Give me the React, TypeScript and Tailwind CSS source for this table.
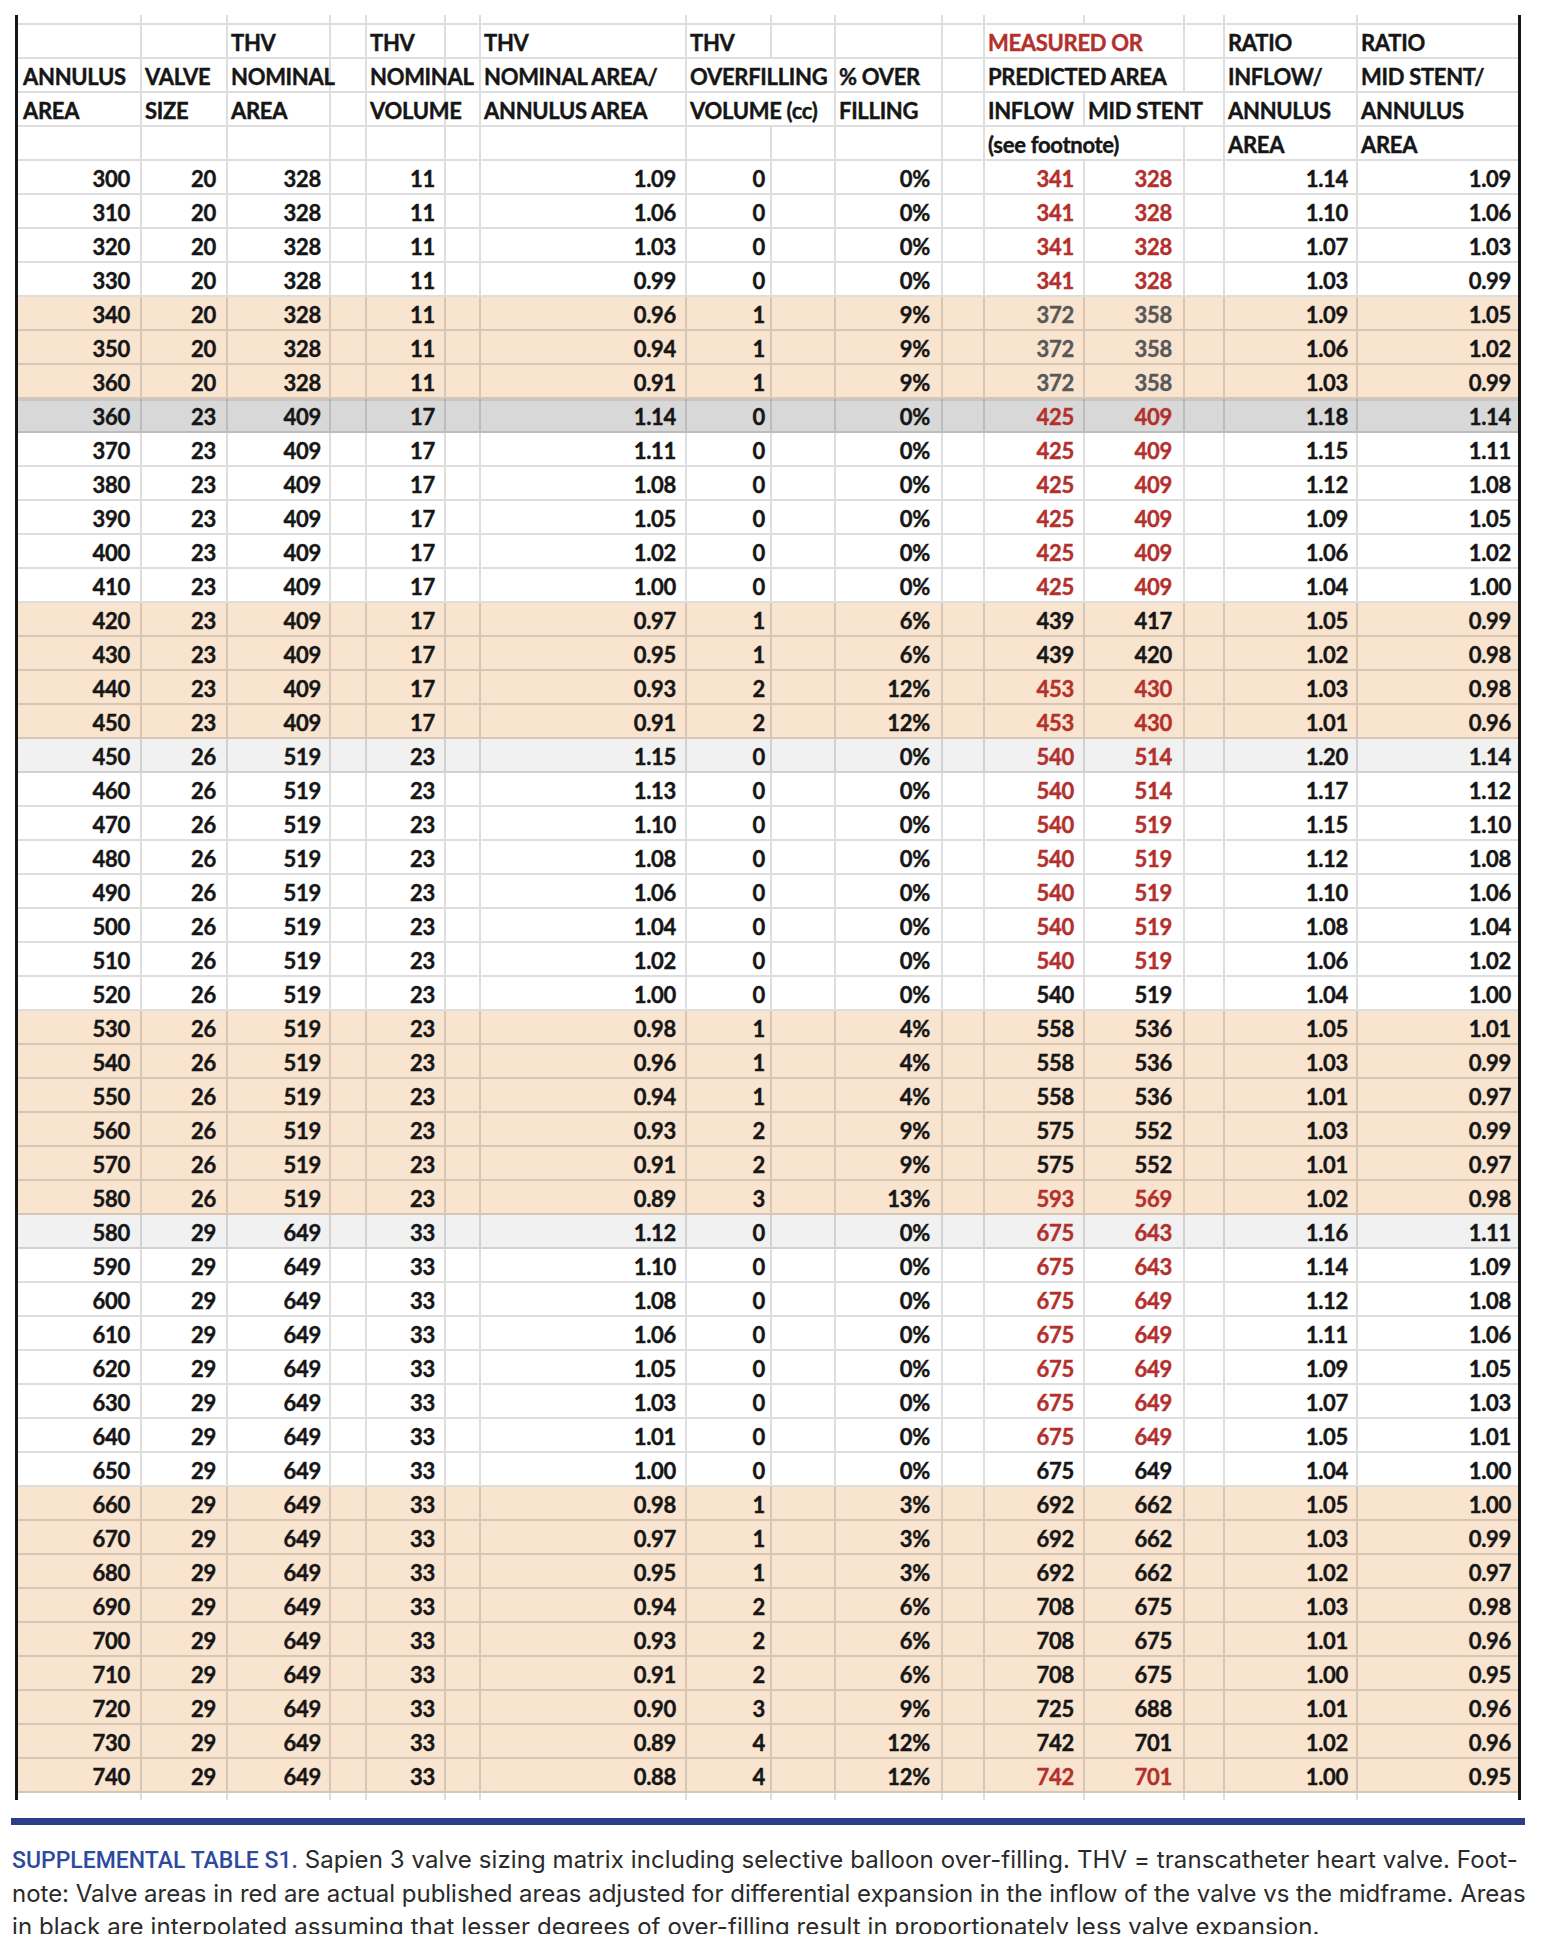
import React from "react";

const GRID =
  "grid grid-cols-[124px_86px_103px_36px_79px_35px_206px_85px_64px_107px_42px_100px_100px_40px_133px_160px]";

type HCell = { t?: string; s?: number; red?: boolean };

const RAW = `300,20,328,11,1.09,0,0%,341,328,1.14,1.09,w,r
310,20,328,11,1.06,0,0%,341,328,1.10,1.06,w,r
320,20,328,11,1.03,0,0%,341,328,1.07,1.03,w,r
330,20,328,11,0.99,0,0%,341,328,1.03,0.99,w,r
340,20,328,11,0.96,1,9%,372,358,1.09,1.05,p,s
350,20,328,11,0.94,1,9%,372,358,1.06,1.02,p,s
360,20,328,11,0.91,1,9%,372,358,1.03,0.99,p,s
360,23,409,17,1.14,0,0%,425,409,1.18,1.14,g,r
370,23,409,17,1.11,0,0%,425,409,1.15,1.11,w,r
380,23,409,17,1.08,0,0%,425,409,1.12,1.08,w,r
390,23,409,17,1.05,0,0%,425,409,1.09,1.05,w,r
400,23,409,17,1.02,0,0%,425,409,1.06,1.02,w,r
410,23,409,17,1.00,0,0%,425,409,1.04,1.00,w,r
420,23,409,17,0.97,1,6%,439,417,1.05,0.99,p,k
430,23,409,17,0.95,1,6%,439,420,1.02,0.98,p,k
440,23,409,17,0.93,2,12%,453,430,1.03,0.98,p,r
450,23,409,17,0.91,2,12%,453,430,1.01,0.96,p,r
450,26,519,23,1.15,0,0%,540,514,1.20,1.14,l,r
460,26,519,23,1.13,0,0%,540,514,1.17,1.12,w,r
470,26,519,23,1.10,0,0%,540,519,1.15,1.10,w,r
480,26,519,23,1.08,0,0%,540,519,1.12,1.08,w,r
490,26,519,23,1.06,0,0%,540,519,1.10,1.06,w,r
500,26,519,23,1.04,0,0%,540,519,1.08,1.04,w,r
510,26,519,23,1.02,0,0%,540,519,1.06,1.02,w,r
520,26,519,23,1.00,0,0%,540,519,1.04,1.00,w,k
530,26,519,23,0.98,1,4%,558,536,1.05,1.01,p,k
540,26,519,23,0.96,1,4%,558,536,1.03,0.99,p,k
550,26,519,23,0.94,1,4%,558,536,1.01,0.97,p,k
560,26,519,23,0.93,2,9%,575,552,1.03,0.99,p,k
570,26,519,23,0.91,2,9%,575,552,1.01,0.97,p,k
580,26,519,23,0.89,3,13%,593,569,1.02,0.98,p,r
580,29,649,33,1.12,0,0%,675,643,1.16,1.11,l,r
590,29,649,33,1.10,0,0%,675,643,1.14,1.09,w,r
600,29,649,33,1.08,0,0%,675,649,1.12,1.08,w,r
610,29,649,33,1.06,0,0%,675,649,1.11,1.06,w,r
620,29,649,33,1.05,0,0%,675,649,1.09,1.05,w,r
630,29,649,33,1.03,0,0%,675,649,1.07,1.03,w,r
640,29,649,33,1.01,0,0%,675,649,1.05,1.01,w,r
650,29,649,33,1.00,0,0%,675,649,1.04,1.00,w,k
660,29,649,33,0.98,1,3%,692,662,1.05,1.00,p,k
670,29,649,33,0.97,1,3%,692,662,1.03,0.99,p,k
680,29,649,33,0.95,1,3%,692,662,1.02,0.97,p,k
690,29,649,33,0.94,2,6%,708,675,1.03,0.98,p,k
700,29,649,33,0.93,2,6%,708,675,1.01,0.96,p,k
710,29,649,33,0.91,2,6%,708,675,1.00,0.95,p,k
720,29,649,33,0.90,3,9%,725,688,1.01,0.96,p,k
730,29,649,33,0.89,4,12%,742,701,1.02,0.96,p,k
740,29,649,33,0.88,4,12%,742,701,1.00,0.95,p,r`;

const ROWS = RAW.split("\n").map((l) => l.trim().split(","));

const HEADER: HCell[][] = [
  [
    {}, {}, { t: "THV" }, {}, { t: "THV" }, {}, { t: "THV" }, { t: "THV" }, {}, {}, {},
    { t: "MEASURED OR", s: 2, red: true }, {}, { t: "RATIO" }, { t: "RATIO" },
  ],
  [
    { t: "ANNULUS" }, { t: "VALVE" }, { t: "NOMINAL" }, {}, { t: "NOMINAL" }, {},
    { t: "NOMINAL AREA/" }, { t: "OVERFILLING", s: 2 }, { t: "% OVER" }, {},
    { t: "PREDICTED AREA", s: 2 }, {}, { t: "INFLOW/" }, { t: "MID STENT/" },
  ],
  [
    { t: "AREA" }, { t: "SIZE" }, { t: "AREA" }, {}, { t: "VOLUME" }, {},
    { t: "ANNULUS AREA" }, { t: "VOLUME (cc)", s: 2 }, { t: "FILLING" }, {},
    { t: "INFLOW" }, { t: "MID STENT", s: 2 }, { t: "ANNULUS" }, { t: "ANNULUS" },
  ],
  [
    {}, {}, {}, {}, {}, {}, {}, {}, {}, {}, {},
    { t: "(see footnote)", s: 2 }, {}, { t: "AREA" }, { t: "AREA" },
  ],
];

const LINE = "border-black/[0.13]";

function HeaderRow({ cells }: { cells: HCell[] }) {
  let col = 0;
  return (
    <div className={GRID}>
      {cells.map((c, i) => {
        const start = col;
        col += c.s ?? 1;
        const last = col >= 16;
        return (
          <div
            key={i}
            className={[
              "flex items-center h-[34px] border-b-2 whitespace-nowrap pt-[3px]",
              LINE,
              last ? "" : "border-r-2",
              c.s === 2 ? "col-span-2" : "",
              start === 0 ? "pl-[5px]" : "pl-[3px]",
              c.red ? "text-[#b3302c]" : "text-[#161616]",
            ].join(" ")}
          >
            {c.t ?? ""}
          </div>
        );
      })}
    </div>
  );
}

function EdgeRow({ h, bottom }: { h: string; bottom: boolean }) {
  return (
    <div className={GRID}>
      {Array.from({ length: 16 }).map((_, i) => (
        <div
          key={i}
          className={[h, LINE, i < 15 ? "border-r-2" : "", bottom ? "border-b-2" : ""].join(" ")}
        />
      ))}
    </div>
  );
}

function DataRow({ r }: { r: string[] }) {
  const [a, b, c, e, g, h, j, l, m, o, p, shade, tone] = r;
  const bg =
    shade === "p"
      ? "bg-[#f9e4cf]"
      : shade === "g"
      ? "bg-[#d8d8d8]"
      : shade === "l"
      ? "bg-[#f1f1f1]"
      : "bg-white";
  const lm =
    tone === "r" ? "text-[#b3302c]" : tone === "s" ? "text-[#585858]" : "text-[#161616]";
  const vals: [string, string, string][] = [
    [a, "", "pr-[10px]"],
    [b, "", "pr-[10px]"],
    [c, "", "pr-[8px]"],
    ["", "", ""],
    [e, "", "pr-[9px]"],
    ["", "", ""],
    [g, "", "pr-[9px]"],
    [h, "", "pr-[5px]"],
    ["", "", ""],
    [j, "", "pr-[11px]"],
    ["", "", ""],
    [l, lm, "pr-[9px]"],
    [m, lm, "pr-[11px]"],
    ["", "", ""],
    [o, "", "pr-[8px]"],
    [p, "", "pr-[7px]"],
  ];
  return (
    <div
      className={[
        GRID,
        bg,
        shade === "g" ? "shadow-[inset_0_2px_0_rgba(0,0,0,0.08)]" : "",
      ].join(" ")}
    >
      {vals.map(([t, col, pad], i) => (
        <div
          key={i}
          className={[
            "flex items-center justify-end h-[34px] border-b-2 whitespace-nowrap pt-[3px]",
            LINE,
            i < 15 ? "border-r-2" : "",
            pad,
            col || "text-[#161616]",
          ].join(" ")}
        >
          {t}
        </div>
      ))}
    </div>
  );
}

export default function App() {
  return (
    <div className="w-[1552px] h-[1934px] overflow-hidden bg-white">
      <div className="pt-[15px] pl-[15px]">
        <div className="w-[1506px] border-l-[3px] border-r-[3px] border-[#151515] font-['Lato',sans-serif] font-bold text-[22px] leading-none tracking-[-0.3px] [-webkit-text-stroke:0.4px_currentColor]">
          <EdgeRow h="h-[10px]" bottom={true} />
          {HEADER.map((cells, i) => (
            <HeaderRow key={i} cells={cells} />
          ))}
          {ROWS.map((r, i) => (
            <DataRow key={i} r={r} />
          ))}
          <EdgeRow h="h-[7px]" bottom={false} />
        </div>
      </div>
      <div className="mt-[18px] ml-[11px] w-[1514px] h-[7px] bg-[#2c3e8a]" />
      <div className="mt-[18px] ml-[12px] w-[1535px] font-['Inter',sans-serif] text-[24px] leading-[33px] tracking-[0.1px] text-[#2a2a2a]">
        <div className="whitespace-nowrap">
          <span className="text-[#2e4a9e] font-['Roboto',sans-serif] font-medium text-[23px] tracking-normal">
            SUPPLEMENTAL TABLE S1.
          </span>{" "}
          Sapien 3 valve sizing matrix including selective balloon over-filling. THV = transcatheter
          heart valve. Foot-
        </div>
        <div className="whitespace-nowrap tracking-[-0.02px]">
          note: Valve areas in red are actual published areas adjusted for differential expansion in
          the inflow of the valve vs the midframe. Areas
        </div>
        <div className="whitespace-nowrap">
          in black are interpolated assuming that lesser degrees of over-filling result in
          proportionately less valve expansion.
        </div>
      </div>
    </div>
  );
}
